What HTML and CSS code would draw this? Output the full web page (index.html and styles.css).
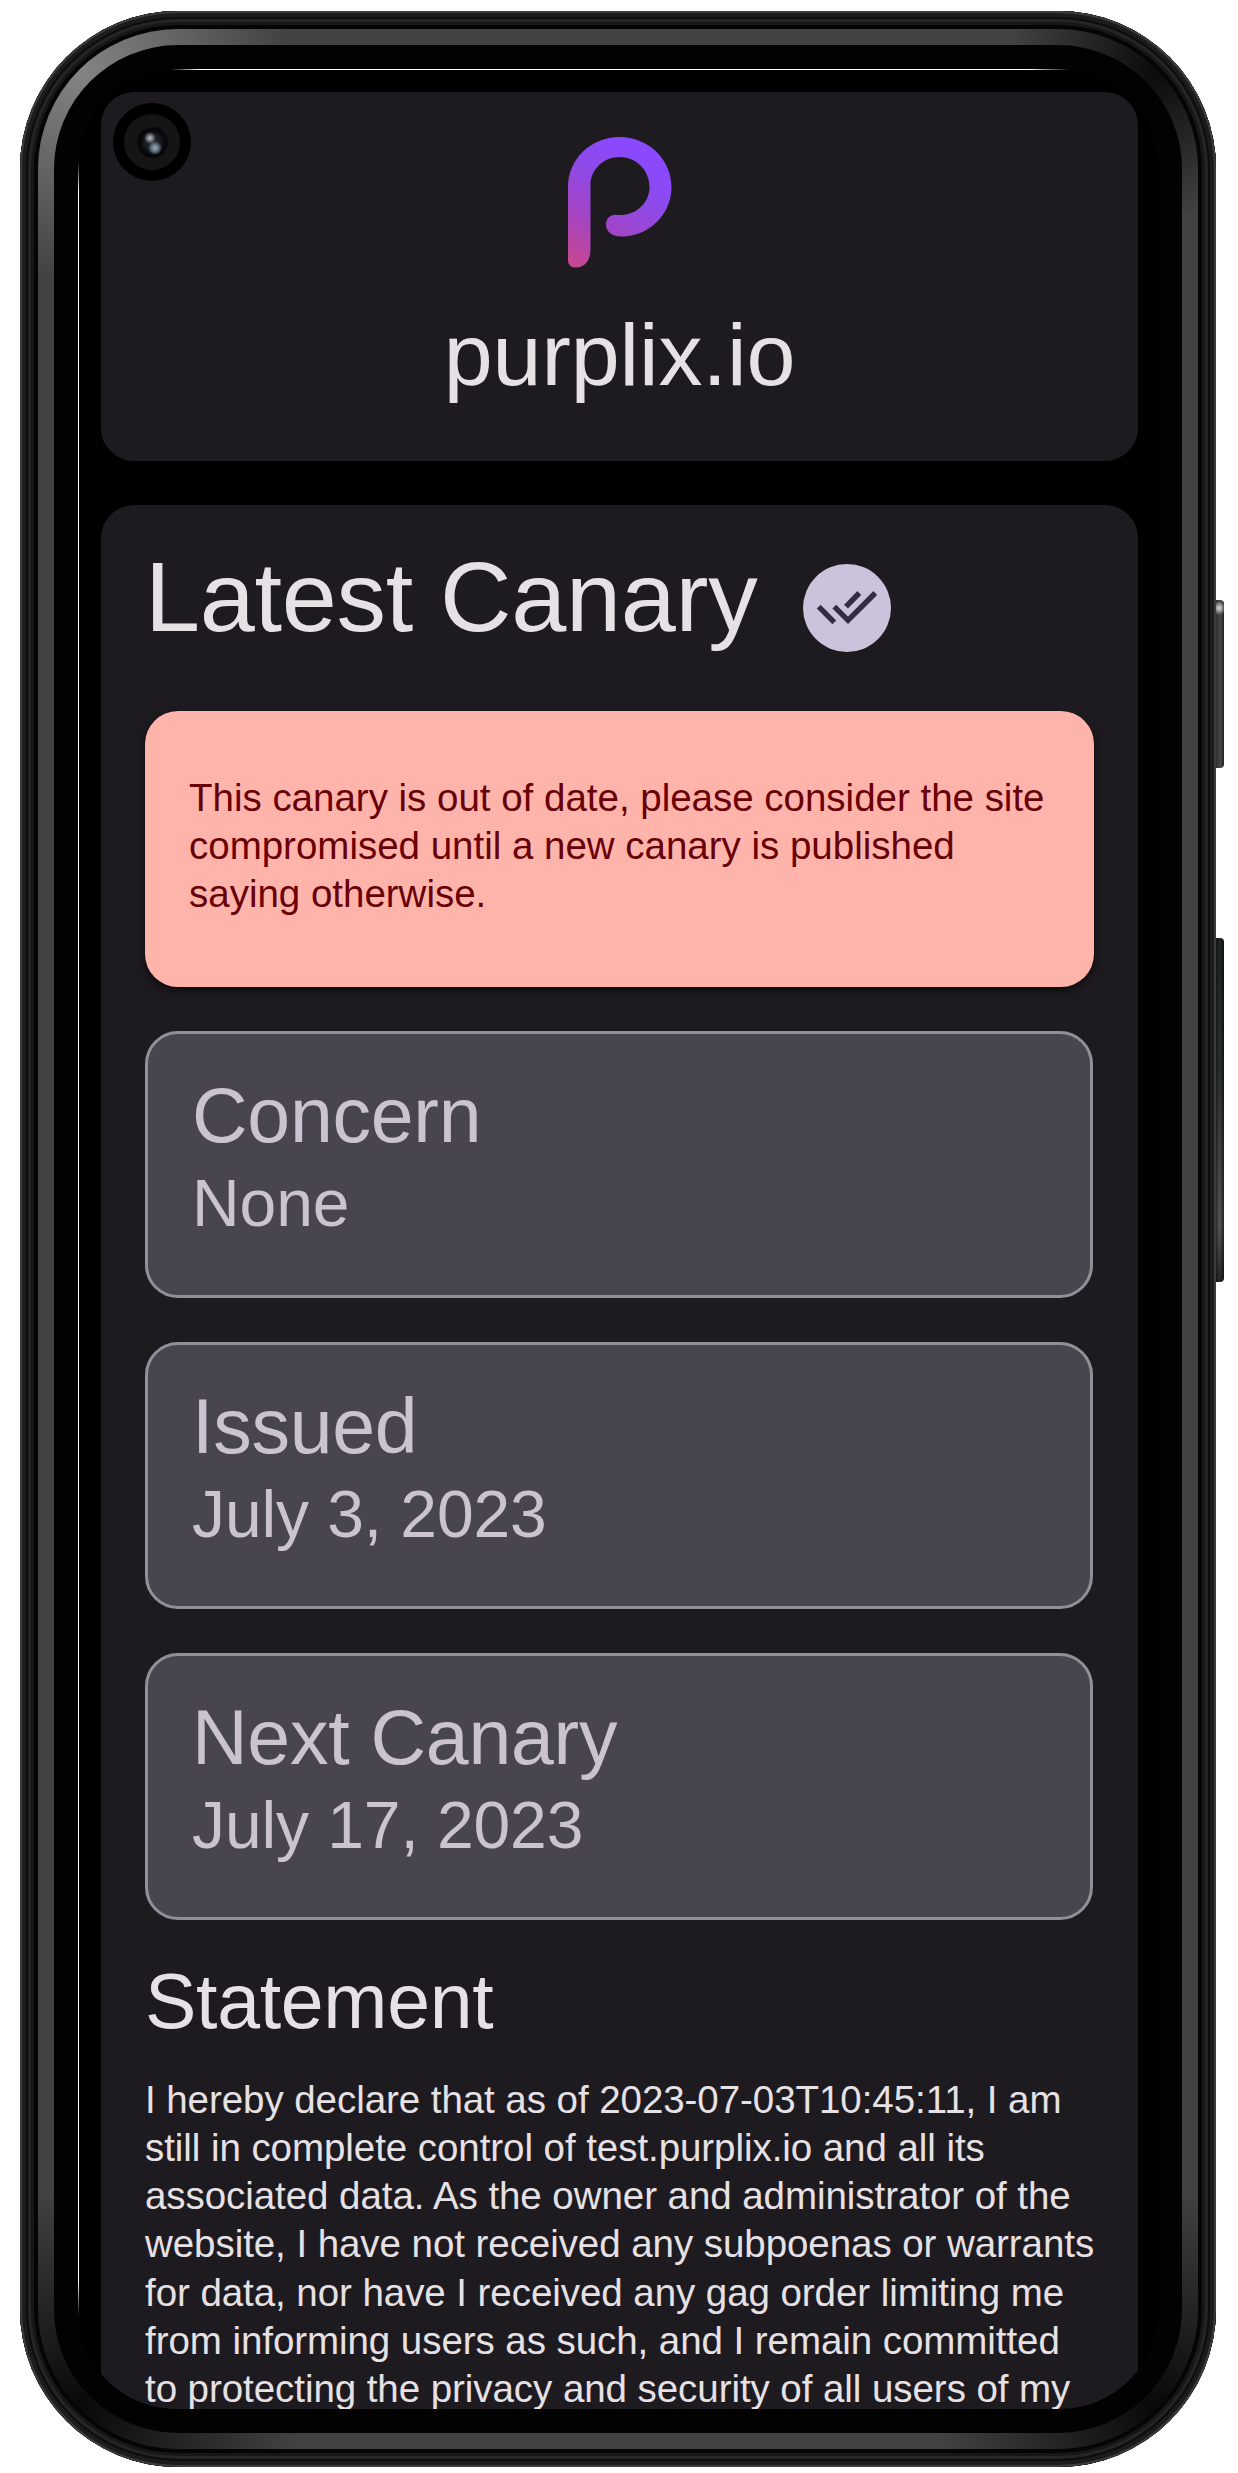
FILE: index.html
```
<!DOCTYPE html>
<html lang="en">
<head>
<meta charset="utf-8">
<title>purplix.io</title>
<link rel="stylesheet" href="styles.css">
</head>
<body>
<div class="stage">
  <div class="device">
    <div class="bezel">
      <div class="glass">
        <main class="screen">
          <header class="card brand">
            <svg class="logo" viewBox="0 0 104 131" width="104" height="131" aria-hidden="true">
              <defs>
                <linearGradient id="tint" gradientUnits="userSpaceOnUse" x1="76" y1="20" x2="8" y2="131">
                  <stop offset="0" stop-color="#8a49ff"/>
                  <stop offset=".3" stop-color="#8f4ae8"/>
                  <stop offset=".6" stop-color="#a045c8"/>
                  <stop offset="1" stop-color="#c9478f"/>
                </linearGradient>
              </defs>
              <path fill="url(#tint)" d="M0 50C0 22 23 0 51.500 0S103.500 22 103.500 50 80 99.500 54 99.500C44 99.500 38 95 38 87.500 38 81 43 77 50 78 68 79 81.500 66 81.500 50 81.500 33 68 20 51.500 20S22.500 33 22.500 48V113C22.500 123 17 130.500 8 130.500 3 130.500 0 128 0 123Z"/>
            </svg>
            <h1 class="site">purplix.io</h1>
          </header>
          <article class="card canary">
            <div class="heading">
              <h2 class="title">Latest Canary</h2>
              <span class="verified">
                <svg viewBox="0 0 88 88" width="88" height="88" fill="none" stroke="#332d41" stroke-width="5.400" aria-hidden="true"><path d="M15.700 42.700 31.300 58.300M31.300 42.700 45 56.300 72.300 29M43 42.700 56.300 29"/></svg>
              </span>
            </div>
            <p class="alert">This canary is out of date, please consider the site<br>compromised until a new canary is published<br>saying otherwise.</p>
            <section class="info"><h3>Concern</h3><p>None</p></section>
            <section class="info"><h3>Issued</h3><p>July 3, 2023</p></section>
            <section class="info"><h3>Next Canary</h3><p>July 17, 2023</p></section>
            <h3 class="subtitle">Statement</h3>
            <p class="statement">I hereby declare that as of 2023-07-03T10:45:11, I am<br>still in complete control of test.purplix.io and all its<br>associated data. As the owner and administrator of the<br>website, I have not received any subpoenas or warrants<br>for data, nor have I received any gag order limiting me<br>from informing users as such, and I remain committed<br>to protecting the privacy and security of all users of my</p>
          </article>
        </main>
      </div>
    </div>
    <span class="glint glint-top"></span>
    <span class="glint glint-left"></span>
    <span class="camera"><span class="lens"></span></span>
    <span class="button power"></span>
    <span class="button volume"></span>
  </div>
</div>
</body>
</html>
```
FILE: styles.css
```
* { box-sizing: border-box; }
html, body { margin: 0; }
body {
  width: 1238px;
  height: 2473px;
  overflow: hidden;
  background: #fff;
  color: #e6e1e5;
  font-family: "Liberation Sans", Arial, sans-serif;
}
h1, h2, h3, p { margin: 0; font-weight: 400; }

/* Device frame */
.stage { padding: 11px 0 0 20px; }
.device {
  position: relative;
  width: 1196px;
  height: 2456px;
  padding: 18px;
  border-radius: 158px;
  background: #161616;
  box-shadow:
    inset 0 0 0 2px #3b3c3c,
    inset 0 0 0 6px #1c1c1c,
    inset 0 0 0 8px #0d0d0d,
    inset 0 0 0 11px #252525,
    inset 0 0 0 14px #171717,
    inset 0 0 0 18px #050505;
}
.bezel {
  width: 1160px;
  height: 2420px;
  padding: 16px;
  border-radius: 140px;
  background:
    radial-gradient(circle at 40px 40px, #858585 0, rgba(133, 133, 133, 0) 210px),
    radial-gradient(circle at 1120px 40px, #0a0a0a 0, rgba(10, 10, 10, 0) 150px),
    radial-gradient(circle at 40px 2380px, #080808 0, rgba(8, 8, 8, 0) 220px),
    radial-gradient(circle at 1120px 2380px, #080808 0, rgba(8, 8, 8, 0) 220px),
    #424242;
}
.glass {
  width: 1128px;
  height: 2388px;
  padding: 24px;
  border-radius: 124px;
  background: #020202;
}
.screen {
  display: flex;
  flex-direction: column;
  gap: 44px;
  width: 1080px;
  height: 2340px;
  padding: 23px 20px 0 23px;
  border-radius: 98px;
  overflow: hidden;
  background: #000;
}

/* Page cards */
.card { flex: none; border-radius: 33px; background: #1e1b20; }
.brand {
  display: flex;
  flex-direction: column;
  align-items: center;
  height: 369px;
  padding-top: 45px;
}
.logo { display: block; }
.site { margin-top: 32px; font-size: 88px; line-height: 110px; letter-spacing: -.05px; }
.canary {
  display: flex;
  flex-direction: column;
  height: 2100px;
  padding: 44px;
}
.heading { display: flex; align-items: center; gap: 44px; height: 118px; }
.title {
  align-self: flex-start;
  width: 614px;
  font-size: 99px;
  line-height: 96px;
  letter-spacing: -.3px;
  white-space: nowrap;
}
.verified {
  display: grid;
  place-items: center;
  width: 88px;
  height: 88px;
  border-radius: 50%;
  background: #ccc2dc;
}
.alert {
  height: 276px;
  margin-top: 44px;
  padding: 63px 44px;
  border-radius: 33px;
  background: #ffb4ab;
  color: #690005;
  font-size: 38.500px;
  line-height: 48.200px;
  letter-spacing: -.01px;
  white-space: nowrap;
  box-shadow: 0 4px 8px rgba(0, 0, 0, .6);
}
.info {
  width: 948px;
  height: 267px;
  margin-top: 44px;
  padding: 33px 44px;
  border: 3px solid #938f99;
  border-radius: 33px;
  background: #49454f;
  color: #cbc3d0;
}
.info h3 { font-size: 77px; line-height: 96px; letter-spacing: -.25px; }
.info p { font-size: 66px; line-height: 80px; letter-spacing: -.1px; }
.subtitle { margin-top: 33px; font-size: 77px; line-height: 96px; letter-spacing: -.3px; }
.statement {
  margin-top: 27px;
  font-size: 38.500px;
  line-height: 48.125px;
  letter-spacing: -.06px;
  white-space: nowrap;
}

/* Edge reflections */
.glint { position: absolute; }
.glint-top {
  left: 150px;
  top: 58px;
  width: 900px;
  height: 1px;
  background: linear-gradient(90deg, transparent, #fff 30px, #fff 860px, transparent);
}
.glint-left {
  left: 58px;
  top: 150px;
  width: 1px;
  height: 2156px;
  background: linear-gradient(transparent, #fff 30px, #fff 2120px, transparent);
}

/* Front camera */
.camera {
  position: absolute;
  left: 93px;
  top: 92px;
  display: grid;
  place-items: center;
  width: 78px;
  height: 78px;
  border: 11px solid #000;
  border-radius: 50%;
  background: #151515;
}
.lens {
  width: 31px;
  height: 31px;
  border-radius: 50%;
  background:
    radial-gradient(circle at 13px 11px, #c4c6cc 0, rgba(150, 152, 160, .7) 3px, transparent 6px),
    radial-gradient(circle at 18px 21px, #9aafb8 0, rgba(110, 130, 142, .8) 4px, transparent 7px),
    radial-gradient(circle, #262a36 0, #15171d 9px, #08080b 12px);
}

/* Side keys */
.button { position: absolute; left: 1196px; width: 8px; border-radius: 0 4px 4px 0; }
.power {
  top: 589px;
  height: 168px;
  background:
    radial-gradient(circle at 3px 8px, #ddd 0, rgba(200, 200, 200, 0) 7px),
    linear-gradient(90deg, #303030, #484848 60%, #202020);
}
.volume {
  top: 927px;
  height: 344px;
  background:
    linear-gradient(90deg, rgba(0, 0, 0, .5), transparent 45%, rgba(0, 0, 0, .6)),
    linear-gradient(#232525, #303232 40%, #585858 84%, #282828);
}
```
